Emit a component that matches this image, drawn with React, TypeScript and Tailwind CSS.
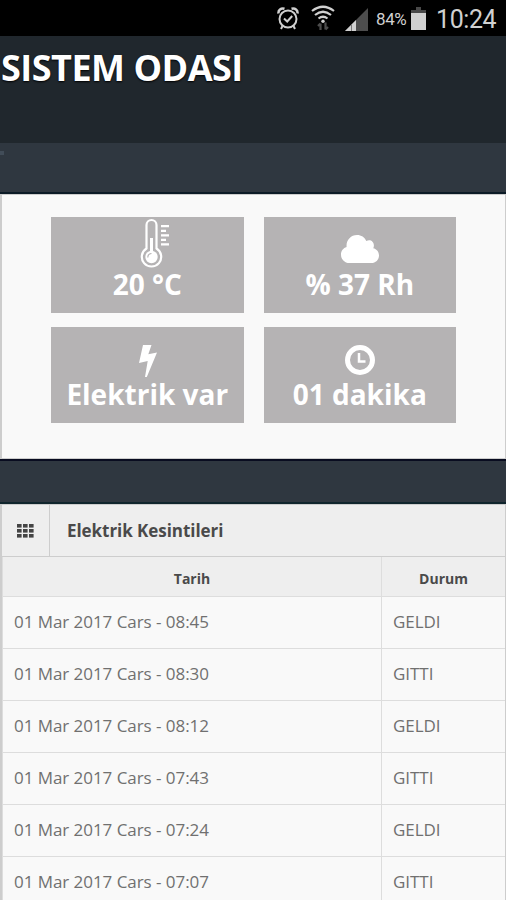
import type { ReactNode } from 'react';

interface Outage {
    date: string;
    status: 'GELDI' | 'GITTI';
}

const outages: Outage[] = [
    { date: '01 Mar 2017 Cars - 08:45', status: 'GELDI' },
    { date: '01 Mar 2017 Cars - 08:30', status: 'GITTI' },
    { date: '01 Mar 2017 Cars - 08:12', status: 'GELDI' },
    { date: '01 Mar 2017 Cars - 07:43', status: 'GITTI' },
    { date: '01 Mar 2017 Cars - 07:24', status: 'GELDI' },
    { date: '01 Mar 2017 Cars - 07:07', status: 'GITTI' },
];

function AlarmIcon() {
    return (
        <svg width="22" height="24" viewBox="0 0 22 24" fill="none" stroke="#d0d0d0" strokeWidth="2">
            <circle cx="11" cy="13" r="8.5" />
            <path d="M7 12.5l3.2 3 5-5.5" />
            <path d="M1.5 7.5C1 4 4 1.8 7.5 2.8M20.5 7.5C21 4 18 1.8 14.5 2.8" strokeWidth="2.5" />
            <path d="M5.5 20l-1.500 3M16.500 20l1.500 3" />
        </svg>
    );
}

function WifiIcon() {
    return (
        <svg width="24" height="26" viewBox="0 0 24 26" fill="none" stroke="#d0d0d0" strokeWidth="2.2">
            <path d="M1 6Q12-2.500 23 6" />
            <path d="M4 10Q12 3.500 20 10" />
            <path d="M7.500 13.500Q12 10 16.500 13.500" />
            <circle cx="12" cy="16.200" r="1.700" fill="#d0d0d0" stroke="none" />
            <path d="M9.500 25v-6.500M7 21l2.500-2.500M14.500 17.500v7M17 22l-2.500 2.500" stroke="#4d4d4d" />
        </svg>
    );
}

function SignalIcon() {
    return (
        <svg width="23" height="23" viewBox="0 0 23 23">
            <path d="M23 0v23H0z" fill="#4d4d4d" />
            <path d="M11 12v11H0z" fill="#d0d0d0" />
            <path d="M6.500 16v7" stroke="#777" />
        </svg>
    );
}

function BatteryIcon() {
    return (
        <svg width="15" height="23" viewBox="0 0 15 23">
            <path d="M5 0h5v3h5v4H0V3h5z" fill="#494949" />
            <path d="M0 6h15v17H0z" fill="#d0d0d0" />
        </svg>
    );
}

function ThermometerIcon() {
    return (
        <svg width="30" height="51" viewBox="0 0 30 51" fill="none" stroke="#fff">
            <path d="M6.500 31.500V8a5 5 0 0 1 10 0v23.500a9.700 9.700 0 1 1-10 0z" strokeWidth="2.200" />
            <path d="M11.500 21v14" strokeWidth="3" />
            <circle cx="11.500" cy="40" r="6.200" fill="#fff" stroke="none" />
            <path d="M7.800 40.500a4 4 0 0 1 3.700-4" stroke="#b5b3b4" strokeWidth="1.200" />
            <path d="M21 9.200h8M21 13.800h5M21 18.300h8M21 22.800h5M21 27.300h8" strokeWidth="2.200" />
        </svg>
    );
}

function CloudIcon() {
    return (
        <svg width="38" height="28" viewBox="0 0 38 28" fill="#fff">
            <path d="M8.500 28C3.500 28 0 24.200 0 19.700c0-4 2.300-6.700 5.600-7.800C4.900 5.500 9.600 0 16 0c4.300 0 7.700 2.300 9.300 6 3.800-2.300 8.300.5 7.500 5.400-.1.700-.3 1.200-.6 1.800 3.500.7 5.800 3.600 5.800 7.200 0 4.300-3.400 7.600-7.700 7.600z" />
        </svg>
    );
}

function BoltIcon() {
    return (
        <svg width="18" height="32" viewBox="0 0 18 32" fill="#fff">
            <path d="M4 0h8.500L9.300 9.300 18 7.500 7.800 32H6L8.700 16 0 18z" />
        </svg>
    );
}

function ClockIcon() {
    return (
        <svg width="30" height="30" viewBox="0 0 30 30" fill="none" stroke="#fff">
            <circle cx="15" cy="15" r="12.500" strokeWidth="5" />
            <path d="M14 8v8.500h6.500" strokeWidth="2.500" />
        </svg>
    );
}

function GridIcon() {
    return (
        <svg width="17" height="14" viewBox="0 0 17 14" fill="#444">
            {[0, 5, 10].map((y) =>
                [0, 6, 12].map((x) => <rect key={`${x}-${y}`} x={x} y={y} width="4.600" height="3.600" />)
            )}
        </svg>
    );
}

function StatTile({ icon, children }: { icon: ReactNode; children: ReactNode }) {
    return (
        <div className="flex h-24 flex-col items-center bg-[#b5b3b4] text-white">
            <div className="flex h-[51px] shrink-0 items-end">{icon}</div>
            <div className="text-[28px] leading-8 font-bold whitespace-nowrap">{children}</div>
        </div>
    );
}

export default function App() {
    return (
        <div className="h-[900px] w-[506px] overflow-hidden bg-[#2f3740] font-['Open_Sans','Noto_Sans',sans-serif]">
            {/* Status bar */}
            <div className="flex h-9 items-center justify-end bg-black pr-2.5 font-[Roboto,sans-serif] text-[#d0d0d0]">
                <AlarmIcon />
                <div className="ml-3"><WifiIcon /></div>
                <div className="ml-2.5 pt-0.5"><SignalIcon /></div>
                <span className="ml-2 w-[31px] pt-1 text-[17px] tracking-tight whitespace-nowrap">84%</span>
                <div className="ml-1"><BatteryIcon /></div>
                <span className="ml-2.5 w-[60px] pt-1 text-[25px] tracking-[-0.4px] whitespace-nowrap">10:24</span>
            </div>

            <header className="h-[107px] bg-[#20272d] pt-2">
                <h1 className="pl-px text-[36px] leading-12 font-bold tracking-[-0.5px] whitespace-nowrap text-white [text-shadow:0_1px_2px_#000]">
                    SISTEM ODASI
                </h1>
            </header>
            <div className="h-[51px] border-b-2 border-[#0c1b27] pt-2">
                <div className="h-1 w-1 bg-[#414c58]" />
            </div>

            {/* Sensors */}
            <section className="h-[265px] border-t border-r border-b border-l-2 border-[#cdcdcd] bg-[#f9f9f9] pt-[22px] pl-[49px]">
                <div className="grid w-[405px] grid-cols-2 gap-x-5 gap-y-3.5">
                    <StatTile icon={<div className="pl-4"><ThermometerIcon /></div>}>20 °C</StatTile>
                    <StatTile icon={<div className="pb-[5px]"><CloudIcon /></div>}>% 37 Rh</StatTile>
                    <StatTile icon={<div className="pb-px pl-px"><BoltIcon /></div>}>Elektrik var</StatTile>
                    <StatTile icon={<div className="pb-[3px]"><ClockIcon /></div>}>01 dakika</StatTile>
                </div>
            </section>

            <div className="h-[45px] border-t-2 border-b-2 border-t-[#090c20] border-b-[#10252d]" />

            {/* Power outages */}
            <section className="border-t border-r border-l-2 border-[#cdcdcd] bg-[#eeeeee] text-[#4a4a4a]">
                <div className="flex h-[52px] border-b border-[#cdcdcd]">
                    <div className="flex w-12 items-center justify-center border-r border-[#cdcdcd]">
                        <GridIcon />
                    </div>
                    <h2 className="pl-[17px] text-[17px] leading-[51px] font-bold tracking-[-0.05px] whitespace-nowrap">
                        Elektrik Kesintileri
                    </h2>
                </div>
                <table className="w-full table-fixed border-separate border-spacing-0 border-l border-[#dddddd]">
                    <thead>
                        <tr className="h-10 text-sm">
                            <th className="w-[378px] border-b border-[#dddddd] p-0 pt-[5px]">Tarih</th>
                            <th className="border-b border-l border-[#dddddd] p-0 pt-[5px]">Durum</th>
                        </tr>
                    </thead>
                    <tbody>
                        {outages.map((outage) => (
                            <tr key={outage.date} className="h-[52px] bg-[#f9f9f9] text-[17px] tracking-[-0.05px] text-[#707070]">
                                <td className="border-b border-[#dddddd] p-0 pb-0.5 pl-[11px]">{outage.date}</td>
                                <td className="border-b border-l border-[#dddddd] p-0 pb-0.5 pl-[11px]">{outage.status}</td>
                            </tr>
                        ))}
                    </tbody>
                </table>
            </section>
        </div>
    );
}
